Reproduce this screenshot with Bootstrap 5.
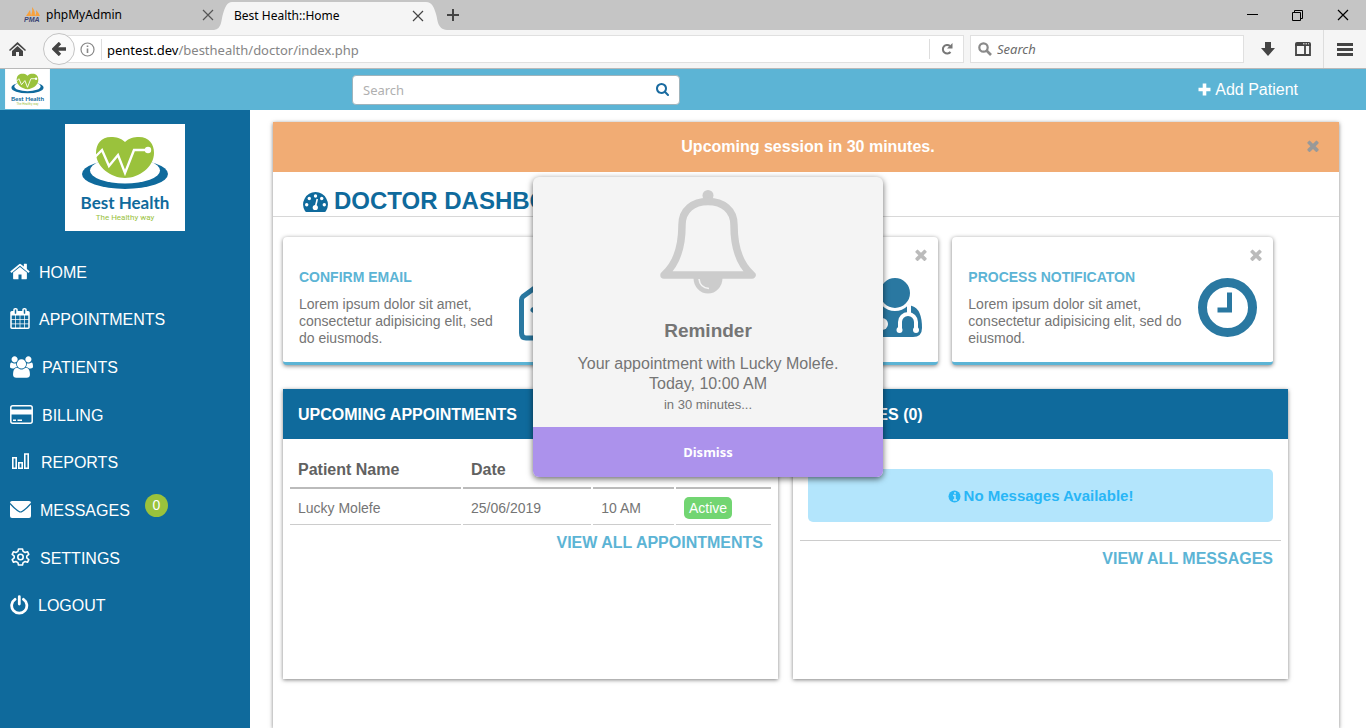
<!DOCTYPE html>
<html lang="en">
<head>
<meta charset="utf-8">
<meta name="viewport" content="width=device-width, initial-scale=1">
<title>Best Health::Home</title>
<link href="https://cdn.jsdelivr.net/npm/bootstrap@5.3.0/dist/css/bootstrap.min.css" rel="stylesheet">
<style>
:root { --navy: #0f6a9c; --sky: #5cb4d5; --grey: #757575; --soft: 0 1px 4px rgba(0,0,0,.5); }
body { font-family: "Liberation Sans", Arial, sans-serif; font-size: 14px; color: var(--grey); background: #fff; overflow-x: hidden; }
svg { display: block; flex: none; }
button { border: 0; background: none; padding: 0; }
a { text-decoration: none; }

/* browser chrome */
.chrome { font-family: "Noto Sans", "Open Sans", sans-serif; font-size: 12px; color: #000; }
.tabstrip { background: #c5c5c5; height: 30px; }
.tab-idle { width: 214px; padding: 0 0 0 24px; }
.tab-mid { width: 194px; background: #f5f5f5; margin-top: 2px; height: 28px; padding: 0 2px; }
.wincontrols { gap: 34px; padding-right: 17px; }
.toolbar { background: #f5f5f5; height: 39px; border-bottom: 1px solid #b9b9b9; padding-left: 9px; }
.backbtn { width: 32px; height: 32px; border: 1px solid #c4c4c4; border-radius: 50%; background: #fafafa; z-index: 1; margin: 0 -16px 0 17px; }
.urlbox, .websearch { height: 28px; background: #fff; border: 1px solid #e0e0e0; font-size: 13px; }
.urlbox { padding-left: 20px; }
.urltext { color: #858585; outline: 0; border-left: 1px solid #ddd; padding: 1px 0 0 5px; margin-left: 6px; line-height: 20px; }
.urltext b { color: #000; font-weight: 400; }
.reload { border-left: 1px solid #ddd; width: 34px; height: 20px; }
.websearch { width: 274px; margin: 0 17px 0 6px; padding-left: 7px; }
.websearch input { font-style: italic; border: 0; outline: 0; background: none; width: 100%; padding: 2px 0 0 5px; }
.websearch input::placeholder { color: #6b6b6b; opacity: 1; }
.menubtn { border-left: 1px solid #ddd; height: 38px; width: 43px; }

/* application header */
.apphead { background: var(--sky); height: 41px; }
.brand { width: 250px; padding-left: 5px; flex: none; }
.appsearch { width: 24%; height: 30px; margin-left: 102px; background: #fff; border: 1px solid #9fb4bc; border-radius: 4px; padding: 0 10px; }
.appsearch input { border: 0; outline: 0; background: none; font: 13px "Noto Sans", sans-serif; padding: 0; min-width: 0; }
.appsearch input::placeholder { color: #b0b0b0; opacity: 1; }
.addlink { color: #fff; font-size: 16px; gap: 4px; margin-right: 68px; }

/* sidebar */
.sidebar { width: 250px; flex: none; background: var(--navy); padding-top: 14px; }
.menu { height: 381px; margin: 18px 0 0; }
.menu li { flex: 1 1 0; }
.menu a { color: #fff; font-size: 16px; gap: 9px; padding-left: 10px; }
.menu svg { margin-bottom: 3px; }
.count { width: 23px; height: 23px; border-radius: 50%; background: #9ac23c; font-size: 14px; margin: 0 0 10px 6px; }

/* content */
.content-area { padding: 12px 27px 0 23px; }
.sheet { box-shadow: var(--soft); background: #fff; }
.session { background: #f1ac74; height: 50px; color: #fff; font-size: 16px; }
.session strong { padding-left: 36px; }
.session button { padding: 0 20px 2px 0; }
.pagetitle { height: 45px; border-bottom: 1px solid #d8d8d8; color: var(--navy); font-size: 24px; font-weight: 700; padding: 13px 0 0 30px; gap: 6px; margin: 0; line-height: 32px; }
.pagetitle svg { margin-top: 7px; }
.tiles { padding: 20px 66px 0 10px; }
.tiles .row { --bs-gutter-x: 14px; }
.tile { height: 128px; border-radius: 4px; border-bottom: 3px solid var(--sky); box-shadow: var(--soft); padding: 12px 16px 0; background: #fff; }
.tile .shut { right: 11px; top: 12px; }
.tile h2 { font-size: 14px; font-weight: 700; color: var(--sky); line-height: 16px; margin: 20px 0 11px; }
.tile p { font-size: 14px; line-height: 17px; margin: 0; }
.tile .glyph { margin: 29px 0 0 10px; }
.panels { padding: 24px 51px 0 10px; }
.panels .row { --bs-gutter-x: 15px; }
.panel { height: 290px; box-shadow: var(--soft); background: #fff; }
.panel h2 { background: var(--navy); color: #fff; font-size: 16px; font-weight: 700; line-height: 48px; padding: 2px 0 0 15px; margin: 0; }
.visits { width: calc(100% - 10px); margin: 9px 5px 0; border-collapse: separate; border-spacing: 2px 0; table-layout: fixed; }
.visits th { font-size: 16px; color: #616161; border-bottom: 2px solid #bbb; height: 41px; padding: 4px 8px 0; }
.visits td { border-bottom: 1px solid #ccc; height: 36px; padding: 3px 8px 0; }
.active-tag { background: #72d572; color: #fff; border-radius: 5px; padding: 0 5px; line-height: 22px; display: inline-block; }
.more { color: var(--sky); font-size: 16px; font-weight: 700; line-height: 20px; padding: 8px 15px 0; }
.notice { background: #b3e5fc; color: #29b6f6; border-radius: 5px; height: 53px; margin: 30px 15px 18px; padding-top: 1px; font-size: 15px; font-weight: 700; gap: 3px; }
.rule { border-top: 1px solid #ccc; margin: 0 7px; }

/* reminder dialog */
.overlay { top: 177px; padding-left: 50px; pointer-events: none; z-index: 5; }
.reminder { width: 350px; background: #f4f4f4; border-radius: 6px; box-shadow: 0 2px 6px rgba(0,0,0,.6); overflow: hidden; pointer-events: auto; }
.reminder .upper { height: 250px; padding-top: 13px; }
.reminder h3 { font-size: 19px; font-weight: 700; line-height: 24px; margin: 25px 0 11px; }
.reminder p { font-size: 16px; line-height: 20px; margin: 0; }
.reminder small { font-size: 13px; line-height: 22px; display: block; }
.dismiss { background: #ac92ec; color: #fff; height: 50px; font: bold 13px "Noto Sans", sans-serif; }
</style>
</head>
<body class="d-flex flex-column min-vh-100">

<svg width="0" height="0" class="position-absolute" aria-hidden="true">
  <symbol id="x" viewBox="302 302 1188 1252"><path d="M1490 1322q0 40-28 68l-136 136q-28 28-68 28t-68-28l-294-294-294 294q-28 28-68 28t-68-28l-136-136q-28-28-28-68t28-68l294-294-294-294q-28-28-28-68t28-68l136-136q28-28 68-28t68 28l294 294 294-294q28-28 68-28t68 28l136 136q28 28 28 68t-28 68l-294 294 294 294q28 28 28 68z"/></symbol>
  <symbol id="thin-x" viewBox="0 0 12 12"><path d="M1 1L11 11M11 1L1 11" fill="none" stroke="currentColor" stroke-width="1.2"/></symbol>
</svg>

<div class="chrome">
  <div class="tabstrip d-flex align-items-center">
    <div class="tab-idle d-flex align-items-center">
      <svg width="18" height="16" viewBox="0 0 18 16" class="me-1" aria-hidden="true"><path fill="#f7a13c" d="M2 9Q4 6 6 3L7 9zM7 9Q9 4 8 0Q11 3 11 9zM11 9Q13 6 12 3Q15 6 16 9z"/><text x="0" y="15" font-size="7" font-weight="700" font-style="italic" font-family="Liberation Sans" fill="#3b4474">PMA</text></svg>
      <span>phpMyAdmin</span>
      <button class="ms-auto" aria-label="Close phpMyAdmin"><svg width="12" height="12" color="#555"><use href="#thin-x"/></svg></button>
    </div>
    <svg width="18" height="28" class="mt-auto" aria-hidden="true"><path d="M0 28C8 27 7 18 9 12C11 5 13 0 18 0V28z" fill="#f5f5f5"/></svg>
    <div class="tab-mid d-flex align-items-center">
      <span>Best Health::Home</span>
      <button class="ms-auto" aria-label="Close Best Health"><svg width="12" height="12" color="#444"><use href="#thin-x"/></svg></button>
    </div>
    <svg width="21" height="28" class="mt-auto" aria-hidden="true"><path d="M21 28C11 27 12 18 10 12C8 5 6 0 0 0V28z" fill="#f5f5f5"/></svg>
    <button aria-label="New tab"><svg width="12" height="12"><path d="M6 0V12M0 6H12" stroke="#444" stroke-width="2"/></svg></button>
    <div class="wincontrols d-flex align-items-center ms-auto">
      <button aria-label="Minimize"><svg width="11" height="11"><path d="M0 4.500H11" stroke="#000"/></svg></button>
      <button aria-label="Restore"><svg width="11" height="11"><path d="M.5 2.500H8.500V10.500H.5zM2.500 2.500V.5H10.500V8.500H8.500" fill="none" stroke="#000"/></svg></button>
      <button aria-label="Close window"><svg width="12" height="12"><use href="#thin-x"/></svg></button>
    </div>
  </div>
  <div class="toolbar d-flex align-items-center">
    <button aria-label="Home page"><svg width="17" height="15"><path fill="#444" d="M8.500 0L17 8L16 9L8.500 2.500L1 9L0 8zM8.500 4L14 9V14H10V10H7V14H3V9z"/></svg></button>
    <button class="backbtn d-flex align-items-center justify-content-center" aria-label="Back"><svg width="14" height="14"><path d="M8 1L2 7L8 13M2 7H14" fill="none" stroke="#444" stroke-width="3.400"/></svg></button>
    <div class="urlbox d-flex align-items-center flex-grow-1">
      <svg width="15" height="15" aria-hidden="true"><circle cx="7.500" cy="7.500" r="6.500" fill="none" stroke="#888" stroke-width="1.200"/><path d="M7.500 6.500V11M7.500 3.500V5" stroke="#888" stroke-width="1.600"/></svg>
      <div class="urltext flex-grow-1" role="textbox" contenteditable="true" spellcheck="false" aria-label="Address"><b>pentest.dev</b>/besthealth/doctor/index.php</div>
      <button class="reload d-flex align-items-center justify-content-center" aria-label="Reload"><svg width="12" height="12"><path d="M9.500 9A4.300 4.300 0 1 1 9 3" fill="none" stroke="#777" stroke-width="2"/><path d="M11.500 0V5.500H6z" fill="#777"/></svg></button>
    </div>
    <div class="websearch d-flex align-items-center">
      <svg width="14" height="14" aria-hidden="true"><circle cx="5.500" cy="5.500" r="4.200" fill="none" stroke="#8a8a8a" stroke-width="2.200"/><path d="M8.500 8.500L13 13" stroke="#8a8a8a" stroke-width="2.600"/></svg>
      <input type="text" placeholder="Search" aria-label="Web search">
    </div>
    <button class="me-3" aria-label="Downloads"><svg width="14" height="14"><path fill="#444" d="M4 0H10V6H14L7 14L0 6H4z"/></svg></button>
    <button class="pe-1 me-2" aria-label="Sidebar"><svg width="16" height="14" class="ms-1"><path d="M1 3V13H15V3zM10 3V13" fill="none" stroke="#444" stroke-width="1.800"/><path d="M0 2Q0 0 2 0H14Q16 0 16 2V4H0z" fill="#444"/><path d="M8 1.800H14" stroke="#f5f5f5" stroke-dasharray="1.500 1"/></svg></button>
    <button class="menubtn d-flex align-items-center justify-content-center" aria-label="Menu"><svg width="16" height="13"><path d="M0 1.500H16M0 6.500H16M0 11.500H16" stroke="#444" stroke-width="3"/></svg></button>
  </div>
</div>

<header class="apphead d-flex align-items-center">
  <a class="brand align-self-start" href="#" aria-label="Best Health"><svg width="45" height="40" viewBox="0 0 120 107"><use href="#logo"/></svg></a>
  <form class="appsearch d-flex align-items-center">
    <input class="flex-grow-1" type="search" placeholder="Search" aria-label="Search">
    <button type="button" aria-label="Search"><svg width="13" height="13" viewBox="64 128 1664 1664" fill="#1a6ba0"><path d="M1216 832q0-185-131.500-316.500t-316.500-131.500-316.500 131.500-131.500 316.500 131.500 316.500 316.500 131.500 316.500-131.500 131.500-316.500zm512 832q0 52-38 90t-90 38q-54 0-90-38l-343-342q-179 124-399 124-143 0-273.500-55.500t-225-150-150-225-55.500-273.500 55.500-273.500 150-225 225-150 273.500-55.500 273.500 55.500 225 150 150 225 55.500 273.500q0 220-124 399l343 343q37 37 37 90z"/></svg></button>
  </form>
  <a class="addlink d-flex align-items-center ms-auto" href="#"><svg width="13" height="13" aria-hidden="true"><path d="M6.500 0.500V12.500M.5 6.500H12.500" stroke="#fff" stroke-width="3.600"/></svg>Add Patient</a>
</header>

<div class="d-flex flex-grow-1">
  <nav class="sidebar">
    <svg width="120" height="107" viewBox="0 0 120 107" class="mx-auto" role="img" aria-label="Best Health">
      <g id="logo">
        <path fill="#fff" d="M0 0H120V107H0z"/>
        <ellipse cx="60" cy="50" rx="43" ry="15" fill="#0f6a9c"/>
        <ellipse cx="60" cy="46.500" rx="35" ry="13" fill="#fff"/>
        <path fill="#fff" d="M34 30H86V41H34z"/>
        <path fill="#9ac23c" d="M60 18C56 14 51 13 46 13C36 13 31 20 31 29C31 43 46 54 60 54C74 54 89 43 89 29C89 20 84 13 74 13C69 13 64 14 60 18z"/>
        <path d="M30 33L37 26L44 42L53 31L60 49L69 26H82" fill="none" stroke="#fff" stroke-width="2.400"/>
        <circle cx="83" cy="26" r="3.200" fill="#fff"/>
        <text x="60" y="85" text-anchor="middle" font-family="Lato, sans-serif" font-weight="700" font-size="17" fill="#0f6a9c">Best Health</text>
        <text x="60" y="96" text-anchor="middle" font-family="Roboto, sans-serif" font-size="8" fill="#9ac23c">The Healthy way</text>
      </g>
    </svg>
    <ul class="menu list-unstyled d-flex flex-column">
      <li class="d-flex"><a class="d-flex align-items-center" href="#"><svg width="20" height="17" viewBox="60 250 1672 1290" fill="#fff"><path d="M1472 992v480q0 26-19 45t-45 19h-384v-384h-256v384h-384q-26 0-45-19t-19-45v-480q0-1 .5-3t.5-3l575-474 575 474q1 2 1 6zm223-69l-62 74q-8 9-21 11h-3q-13 0-21-7l-692-577-692 577q-12 8-24 7-13-2-21-11l-62-74q-8-10-7-23.500t11-21.500l719-599q32-26 76-26t76 26l244 204v-195q0-14 9-23t23-9h192q14 0 23 9t9 23v408l219 182q10 8 11 21.500t-7 23.500z"/></svg>HOME</a></li>
      <li class="d-flex"><a class="d-flex align-items-center" href="#"><svg width="20" height="21" viewBox="64 0 1664 1792" fill="#fff"><path d="M192 1664h288v-288h-288v288zm352 0h320v-288h-320v288zm-352-352h288v-320h-288v320zm352 0h320v-320h-320v320zm-352-384h288v-288h-288v288zm736 736h320v-288h-320v288zm-384-736h320v-288h-320v288zm768 736h288v-288h-288v288zm-384-352h320v-320h-320v320zm-352-864v-288q0-13-9.500-22.500t-22.500-9.500h-64q-13 0-22.500 9.500t-9.500 22.500v288q0 13 9.500 22.500t22.500 9.500h64q13 0 22.500-9.500t9.500-22.500zm736 864h288v-320h-288v320zm-384-384h320v-288h-320v288zm384 0h288v-288h-288v288zm32-480v-288q0-13-9.500-22.500t-22.500-9.500h-64q-13 0-22.500 9.500t-9.500 22.500v288q0 13 9.500 22.500t22.500 9.500h64q13 0 22.500-9.500t9.500-22.500zm384-64v1280q0 52-38 90t-90 38h-1408q-52 0-90-38t-38-90v-1280q0-52 38-90t90-38h128v-96q0-66 47-113t113-47h64q66 0 113 47t47 113v96h384v-96q0-66 47-113t113-47h64q66 0 113 47t47 113v96h128q52 0 90 38t38 90z"/></svg>APPOINTMENTS</a></li>
      <li class="d-flex"><a class="d-flex align-items-center" href="#"><svg width="23" height="22" viewBox="64 0 1920 1792" fill="#fff"><path d="M657 896q-162 5-265 128h-134q-82 0-138-40.500t-56-118.500q0-353 124-353 6 0 43.500 21t97.500 42.500 119 21.500q67 0 133-23-5 37-5 66 0 139 81 256zm1071 637q0 120-73 189.500t-194 69.500h-874q-121 0-194-69.500t-73-189.500q0-53 3.500-103.500t14-109 26.500-108.500 43-97.500 62-81 85.500-53.500 111.500-20q10 0 43 21.500t73 48 107 48 135 21.500 135-21.500 107-48 73-48 43-21.500q61 0 111.500 20t85.500 53.500 62 81 43 97.500 26.500 108.500 14 109 3.500 103.500zm-1024-1277q0 106-75 181t-181 75-181-75-75-181 75-181 181-75 181 75 75 181zm704 384q0 159-112.500 271.500t-271.500 112.500-271.500-112.500-112.500-271.500 112.500-271.500 271.500-112.500 271.500 112.500 112.500 271.500zm576 225q0 78-56 118.500t-138 40.500h-134q-103-123-265-128 81-117 81-256 0-29-5-66 66 23 133 23 59 0 119-21.500t97.500-42.500 43.500-21q124 0 124 353zm-128-609q0 106-75 181t-181 75-181-75-75-181 75-181 181-75 181 75 75 181z"/></svg>PATIENTS</a></li>
      <li class="d-flex"><a class="d-flex align-items-center" href="#"><svg width="23" height="19"><rect x=".8" y=".8" width="21.400" height="17.400" rx="2" fill="none" stroke="#fff" stroke-width="1.500"/><path d="M1 4.500H22V9.500H1z" fill="#fff"/><path d="M3 15.300H6M7.500 15.300H12" stroke="#fff" stroke-width="1.500"/></svg>BILLING</a></li>
      <li class="d-flex"><a class="d-flex align-items-center" href="#"><svg width="22" height="17"><path d="M2.800 4.800H6.200V15.200H2.800zM8.800 9.800H12.200V15.200H8.800zM14.800 1H18.200V15.200H14.800z" fill="none" stroke="#fff" stroke-width="1.600"/></svg>REPORTS</a></li>
      <li class="d-flex"><a class="d-flex align-items-center" href="#"><svg width="21" height="17"><rect width="21" height="17" rx="2" fill="#fff"/><path d="M0 2.500Q6 9 9 10.500Q10.500 11.500 12 10.500Q15 9 21 2.500" fill="none" stroke="#0f6a9c" stroke-width="1.200"/></svg>MESSAGES <span class="count d-flex align-items-center justify-content-center">0</span></a></li>
      <li class="d-flex"><a class="d-flex align-items-center" href="#"><svg width="21" height="18" viewBox="-10.500 -9 21 18" fill="none" stroke="#fff" stroke-width="1.600" stroke-linejoin="round"><circle r="2.700"/><path d="M-2-8H2L2.600-5.600L4.600-4.500L7-5.300L8.300-2.700L6.300-1V1L8.300 2.700L7 5.300L4.600 4.500L2.600 5.600L2 8H-2L-2.600 5.600L-4.600 4.500L-7 5.300L-8.300 2.700L-6.300 1V-1L-8.300-2.700L-7-5.300L-4.600-4.500L-2.600-5.600z"/></svg>SETTINGS</a></li>
      <li class="d-flex"><a class="d-flex align-items-center" href="#"><svg width="19" height="20" fill="none" stroke="#fff" stroke-width="2.800" stroke-linecap="round"><path d="M5 4.300A7.600 7.600 0 1 0 13.500 4.300M9.300 1.600V9"/></svg>LOGOUT</a></li>
    </ul>
  </nav>

  <main class="content-area d-flex flex-grow-1">
    <div class="sheet flex-grow-1">
      <div class="session d-flex align-items-center">
        <strong class="flex-grow-1 text-center">Upcoming session in 30 minutes.</strong>
        <button aria-label="Close notice"><svg width="12" height="12" fill="#999"><use href="#x"/></svg></button>
      </div>
      <h1 class="pagetitle d-flex">
        <svg width="25" height="20" viewBox="0 0 25 20" aria-hidden="true"><path fill="#0f6a9c" d="M12.500 0A12.500 12.500 0 0 1 23 19Q22.500 20 21.500 20H3.500Q2.500 20 2 19A12.500 12.500 0 0 1 12.500 0z"/><g fill="#fff"><circle cx="12.500" cy="4" r="1.700"/><circle cx="6.300" cy="6.500" r="1.700"/><circle cx="18.700" cy="6.500" r="1.700"/><circle cx="3.700" cy="12.700" r="1.700"/><circle cx="21.300" cy="12.700" r="1.700"/><circle cx="12.300" cy="15.500" r="2.600"/></g><path d="M12.500 14.500L14.300 7" stroke="#fff" stroke-width="1.600"/></svg>
        DOCTOR DASHBOARD
      </h1>

      <div class="tiles"><div class="row">
        <div class="col-4"><section class="tile d-flex position-relative">
          <div class="flex-grow-1"><h2>CONFIRM EMAIL</h2><p>Lorem ipsum dolor sit amet, consectetur adipisicing elit, sed do eiusmods.</p></div>
          <button class="shut position-absolute" aria-label="Close"><svg width="12" height="12" fill="#bbb"><use href="#x"/></svg></button>
          <svg class="glyph" width="69" height="64" fill="none" stroke="#2a78a1" stroke-width="5" stroke-linejoin="round" stroke-linecap="round"><path d="M2.500 22Q2.500 20 4 18.500L26 2.500Q34-2 42 2.500L64 18.500Q65.500 20 65.500 22V55Q65.500 60 61 60H7Q2.500 60 2.500 55zM14 32L30 43Q34 45 38 43L54 32"/></svg>
        </section></div>
        <div class="col-4"><section class="tile d-flex position-relative">
          <div class="flex-grow-1"><h2>UPDATE PROFILE</h2><p>Lorem ipsum dolor sit amet, consectetur elit.</p></div>
          <button class="shut position-absolute" aria-label="Close"><svg width="12" height="12" fill="#bbb"><use href="#x"/></svg></button>
          <svg class="glyph" width="54" height="60"><g fill="#2a78a1"><path d="M10 28Q1 31 0 48Q0 59 9 59H45Q54 59 54 50Q54 31 44 28L38 26Q27 37 16 26z"/><circle cx="27" cy="15" r="16.500" stroke="#fff" stroke-width="3"/></g><path d="M41 27V36M32 53V44A8 8 0 0 1 48 44V53" fill="none" stroke="#fff" stroke-width="4"/><circle cx="31.500" cy="52" r="3" fill="#fff"/><circle cx="48" cy="52" r="3" fill="#fff"/><path d="M13 30V42" stroke="#fff" stroke-width="3"/><circle cx="14" cy="46" r="6" fill="#fff"/></svg>
        </section></div>
        <div class="col-4"><section class="tile d-flex position-relative">
          <div class="flex-grow-1"><h2>PROCESS NOTIFICATON</h2><p>Lorem ipsum dolor sit amet, consectetur adipisicing elit, sed do eiusmod.</p></div>
          <button class="shut position-absolute" aria-label="Close"><svg width="12" height="12" fill="#bbb"><use href="#x"/></svg></button>
          <svg class="glyph" width="59" height="59" fill="none" stroke="#2a78a1"><circle cx="29.500" cy="29.500" r="25" stroke-width="9"/><path d="M31.500 17V32H22" stroke-width="5" stroke-linecap="square"/></svg>
        </section></div>
      </div></div>

      <div class="panels"><div class="row">
        <div class="col-6"><section class="panel">
          <h2>UPCOMING APPOINTMENTS</h2>
          <table class="visits">
            <colgroup><col style="width:36%"><col style="width:27%"><col style="width:17%"><col style="width:20%"></colgroup>
            <thead><tr><th>Patient Name</th><th>Date</th><th>Time</th><th>Status</th></tr></thead>
            <tbody><tr><td>Lucky Molefe</td><td>25/06/2019</td><td>10 AM</td><td><span class="active-tag">Active</span></td></tr></tbody>
          </table>
          <div class="more text-end"><a class="text-reset" href="#">VIEW ALL APPOINTMENTS</a></div>
        </section></div>
        <div class="col-6"><section class="panel">
          <h2>MESSAGES (0)</h2>
          <div class="notice d-flex align-items-center justify-content-center">
            <svg width="13" height="13" aria-hidden="true"><circle cx="6.500" cy="6.500" r="6" fill="#29b6f6"/><path d="M5 5.500H7V10M5 10H9M6 3H8" fill="none" stroke="#b3e5fc" stroke-width="1.600"/></svg>
            No Messages Available!
          </div>
          <div class="rule"></div>
          <div class="more text-end"><a class="text-reset" href="#">VIEW ALL MESSAGES</a></div>
        </section></div>
      </div></div>
    </div>
  </main>
</div>

<div class="overlay position-absolute start-0 end-0 d-flex justify-content-center">
  <div class="reminder" role="dialog" aria-labelledby="remTitle">
    <div class="upper text-center">
      <svg class="mx-auto" width="96" height="104" viewBox="0 0 96 104" aria-hidden="true"><g fill="#ccc"><circle cx="48" cy="5.500" r="5.500"/><path d="M33.500 88A14.500 15.500 0 0 0 62.500 88z"/></g><path d="M4 85C19 72 22 52 22 35C22 20 33 11.500 48 11.500C63 11.500 74 20 74 35C74 52 77 72 92 85z" fill="none" stroke="#ccc" stroke-width="7.500" stroke-linejoin="round"/><path d="M39 89Q40 98 49 98.500" fill="none" stroke="#f4f4f4" stroke-width="1.600"/></svg>
      <h3 id="remTitle">Reminder</h3>
      <p>Your appointment with Lucky Molefe.<br>Today, 10:00 AM</p>
      <small>in 30 minutes...</small>
    </div>
    <button class="dismiss w-100">Dismiss</button>
  </div>
</div>

<script src="https://cdn.jsdelivr.net/npm/bootstrap@5.3.0/dist/js/bootstrap.bundle.min.js"></script>
</body>
</html>
